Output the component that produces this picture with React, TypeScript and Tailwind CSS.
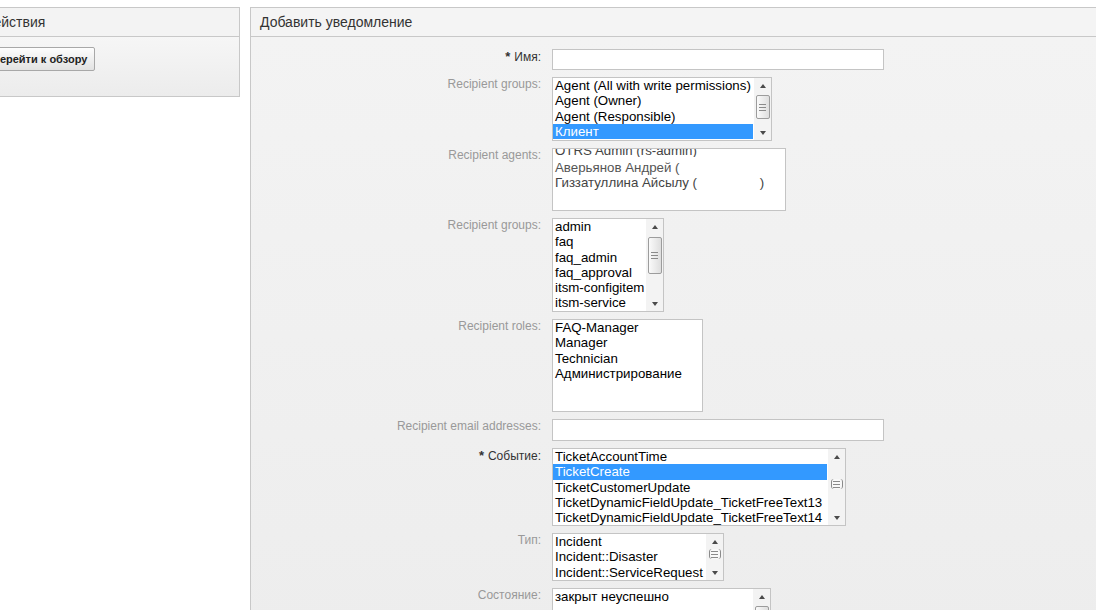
import React from "react";

interface ListProps {
  items: string[];
  selected?: number;
  width: string;
  height: string;
  scroll?: "thumb" | "tiny";
  thumbTop?: string;
  thumbHeight?: string;
}

const Arrow = ({ up }: { up?: boolean }) => (
  <div className="flex h-[15px] items-center justify-center">
    {up ? (
      <div className="h-0 w-0 border-x-[3.5px] border-b-[4px] border-x-transparent border-b-[#4a4a4a]" />
    ) : (
      <div className="h-0 w-0 border-x-[3.5px] border-t-[4px] border-x-transparent border-t-[#4a4a4a]" />
    )}
  </div>
);

const Grip = () => (
  <div className="flex flex-col gap-[2px]">
    <div className="h-px w-[7px] bg-[#8a8a8a]" />
    <div className="h-px w-[7px] bg-[#8a8a8a]" />
    <div className="h-px w-[7px] bg-[#8a8a8a]" />
  </div>
);

const Scrollbar = ({
  kind,
  thumbTop,
  thumbHeight,
}: {
  kind: "thumb" | "tiny";
  thumbTop?: string;
  thumbHeight?: string;
}) => (
  <div className="flex w-[17px] shrink-0 flex-col bg-[#f3f3f3]">
    <Arrow up />
    <div className="flex flex-1 flex-col items-center">
      {kind === "thumb" ? (
        <>
          <div className={thumbTop} />
          <div
            className={`flex w-[14px] items-center justify-center rounded-[2px] border border-[#9c9c9c] bg-gradient-to-r from-[#fafafa] to-[#dedede] ${thumbHeight}`}
          >
            <Grip />
          </div>
        </>
      ) : (
        <div className="flex flex-1 items-center justify-center pb-[6px]">
          <div className="flex h-[10px] w-[12px] items-center justify-center rounded-[3px] border-x border-[#8a8a8a] bg-[#f8f8f8]">
            <Grip />
          </div>
        </div>
      )}
    </div>
    <Arrow />
  </div>
);

const ListBox = ({ items, selected, width, height, scroll, thumbTop, thumbHeight }: ListProps) => (
  <div className={`flex overflow-hidden border border-[#c4c4c4] bg-white ${width} ${height}`}>
    <div className="flex-1 overflow-hidden pr-[1px]">
      {items.map((item, i) => (
        <div
          key={item + i}
          className={`h-[15.3px] whitespace-nowrap pl-[2px] text-[13.3px] leading-[15.3px] ${
            i === selected ? "bg-[#3399ff] text-white" : "text-black"
          }`}
        >
          {item}
        </div>
      ))}
    </div>
    {scroll && <Scrollbar kind={scroll} thumbTop={thumbTop} thumbHeight={thumbHeight} />}
  </div>
);

const Label = ({ text, required }: { text: string; required?: boolean }) => (
  <div
    className={`text-right text-[12px] leading-[15px] ${
      required ? "text-[#333]" : "text-[#999]"
    }`}
  >
    {required && <span className="mr-[4px] text-[13px] font-bold">*</span>}
    {text}
  </div>
);

const TextInput = ({ height }: { height: string }) => (
  <div className={`w-[332px] border border-[#c4c4c4] bg-white ${height}`} />
);

export default function App() {
  return (
    <div className="flex min-h-[610px] gap-[10px] overflow-hidden bg-white pt-[7px] font-['Liberation_Sans',Arial,sans-serif]">
      {/* side panel, cut off at the left edge */}
      <div className="ml-[-27px] h-[90px] w-[267px] shrink-0 border border-[#c8c8c8]">
        <div className="h-[29px] border-b border-[#c8c8c8] bg-[#f3f3f3] pl-[10px] pt-[6px] text-[14px] leading-[16px] text-[#333]">
          Действия
        </div>
        <div className="h-[59px] bg-gradient-to-b from-[#f6f6f6] to-[#ececec] px-[10px] pt-[9px]">
          <button className="h-[24px] rounded-[2px] border border-[#a8a8a8] bg-gradient-to-b from-[#fdfdfd] to-[#e2e2e2] px-[7px] text-[11px] font-bold text-[#222]">
            Перейти к обзору
          </button>
        </div>
      </div>

      {/* main panel */}
      <div className="w-[860px] shrink-0 border border-[#c8c8c8]">
        <div className="h-[29px] border-b border-[#c8c8c8] bg-[#f4f4f4] pl-[9px] pt-[6px] text-[14px] leading-[16px] text-[#333]">
          Добавить уведомление
        </div>
        <div className="grid min-h-[574px] grid-cols-[290px_1fr] content-start gap-x-[11px] gap-y-[7px] bg-gradient-to-b from-[#f3f3f3] to-[#ededed] pt-[12px]">
          <Label text="Имя:" required />
          <TextInput height="h-[21px]" />

          <Label text="Recipient groups:" />
          <ListBox
            items={["Agent (All with write permissions)", "Agent (Owner)", "Agent (Responsible)", "Клиент"]}
            selected={3}
            width="w-[220px]"
            height="h-[64px]"
            scroll="thumb"
            thumbTop="h-[2px]"
            thumbHeight="h-[24px]"
          />

          <Label text="Recipient agents:" />
          <div className="h-[63px] w-[234px] overflow-hidden whitespace-pre border border-[#c4c4c4] bg-white pl-[2px] text-[13.3px] leading-[15.3px] text-[#222]">
            <div className="h-[8px] overflow-hidden leading-[4px] text-[#444]">OTRS Admin (rs-admin)</div>
            <div className="mt-[3px] text-[#555]">Аверьянов Андрей (</div>
            <div className="text-[#444]">Гиззатуллина Айсылу (                 )</div>
          </div>

          <Label text="Recipient groups:" />
          <ListBox
            items={["admin", "faq", "faq_admin", "faq_approval", "itsm-configitem", "itsm-service"]}
            width="w-[112px]"
            height="h-[94px]"
            scroll="thumb"
            thumbTop="h-[3px]"
            thumbHeight="h-[37px]"
          />

          <Label text="Recipient roles:" />
          <ListBox
            items={["FAQ-Manager", "Manager", "Technician", "Администрирование"]}
            width="w-[151px]"
            height="h-[93px]"
          />

          <Label text="Recipient email addresses:" />
          <TextInput height="h-[22px]" />

          <Label text="Событие:" required />
          <ListBox
            items={[
              "TicketAccountTime",
              "TicketCreate",
              "TicketCustomerUpdate",
              "TicketDynamicFieldUpdate_TicketFreeText13",
              "TicketDynamicFieldUpdate_TicketFreeText14",
            ]}
            selected={1}
            width="w-[294px]"
            height="h-[78px]"
            scroll="tiny"
          />

          <Label text="Тип:" />
          <ListBox
            items={["Incident", "Incident::Disaster", "Incident::ServiceRequest"]}
            width="w-[172px]"
            height="h-[48px]"
            scroll="tiny"
          />

          <Label text="Состояние:" />
          <ListBox
            items={["закрыт неуспешно"]}
            width="w-[219px]"
            height="h-[48px]"
            scroll="thumb"
            thumbTop="h-[2px]"
            thumbHeight="h-[14px]"
          />
        </div>
      </div>
    </div>
  );
}
